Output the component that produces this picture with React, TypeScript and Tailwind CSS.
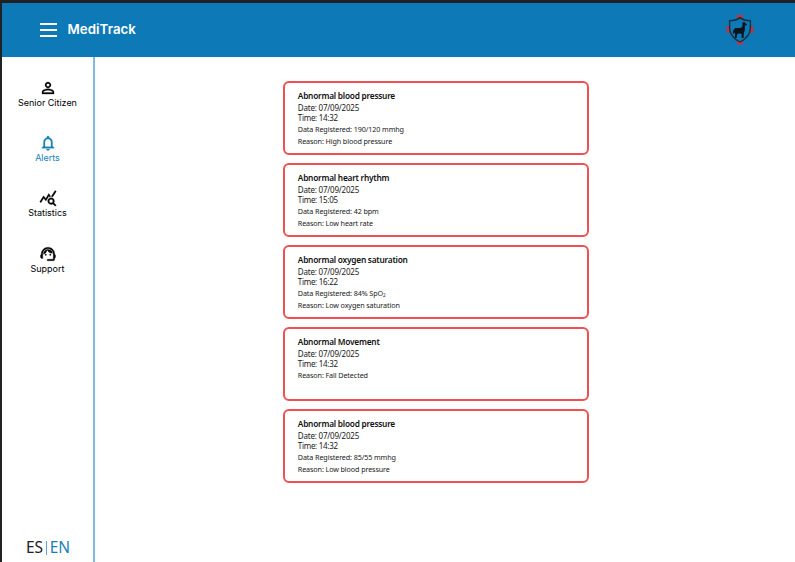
import {
  MdOutlineNotifications,
  MdPersonOutline,
  MdQueryStats,
  MdSupportAgent,
} from "react-icons/md";

type Alert = {
  title: string;
  date: string;
  time: string;
  details: { text: string; sub?: string }[];
};

const alerts: Alert[] = [
  {
    title: "Abnormal blood pressure",
    date: "07/09/2025",
    time: "14:32",
    details: [{ text: "Data Registered: 190/120 mmhg" }, { text: "Reason: High blood pressure" }],
  },
  {
    title: "Abnormal heart rhythm",
    date: "07/09/2025",
    time: "15:05",
    details: [{ text: "Data Registered: 42 bpm" }, { text: "Reason: Low heart rate" }],
  },
  {
    title: "Abnormal oxygen saturation",
    date: "07/09/2025",
    time: "16:22",
    details: [{ text: "Data Registered: 84% SpO", sub: "2" }, { text: "Reason: Low oxygen saturation" }],
  },
  {
    title: "Abnormal Movement",
    date: "07/09/2025",
    time: "14:32",
    details: [{ text: "Reason: Fall Detected" }],
  },
  {
    title: "Abnormal blood pressure",
    date: "07/09/2025",
    time: "14:32",
    details: [{ text: "Data Registered: 85/55 mmhg" }, { text: "Reason: Low blood pressure" }],
  },
];

function Logo() {
  return (
    <svg width="28" height="30" viewBox="0 0 28 30" aria-label="Llama shield">
      <path fill="#c9303c" d="M11 0h6v4h-6zM11 26h6v3.500h-6zM.8 11h4v7h-4zM23.200 11h4v7h-4z" />
      <path
        fill="#0d7ab7"
        stroke="#12303f"
        strokeWidth="1.400"
        d="M14 2.600C11 5 7.500 5.800 3.600 5.600V13c0 6.500 4.500 11 10.400 14 5.900-3 10.400-7.500 10.400-14V5.600C20.500 5.800 17 5 14 2.600Z"
      />
      <path
        fill="#0c1318"
        d="M16.700 6.800l.9.800 1-.8.300 1.300 1.900.8.100 1.300-2 .4-.1 4.800-1 2.300-.2 5.300h-1.900l-.2-4.300-3.800-.1-.7 1.700-.3 2.700H8.900l.2-4-.8-1.500-.6 1.300-.8-.4.400-3 1.900-2.300 5.200-.1 1.900-1.200z"
      />
    </svg>
  );
}

function NavItem({ icon: Icon, label, active = false }: { icon: typeof MdQueryStats; label: string; active?: boolean }) {
  return (
    <a className={`flex h-[55.200px] flex-col items-center ${active ? "text-[#1681b9]" : "text-black"}`}>
      <Icon className="size-[18px] stroke-current stroke-[0.400] [&>path[fill=none]]:stroke-none" />
      <span className="mt-px text-[9px] leading-[10px] tracking-[-0.020px]">{label}</span>
    </a>
  );
}

function AlertCard({ alert }: { alert: Alert }) {
  return (
    <article className="h-[74px] rounded-[6px] border-2 border-[#f05052] pt-[7px] pl-[12.800px] font-['Noto_Sans',sans-serif] whitespace-nowrap text-[#191919]">
      <h2 className="text-[8.300px] leading-[12px] font-semibold tracking-[-0.230px] text-[#111]">{alert.title}</h2>
      <p className="pt-px text-[8px] leading-[10px] tracking-[-0.200px]">Date: {alert.date}</p>
      <p className="mb-px text-[8px] leading-[10px] tracking-[-0.300px]">Time: {alert.time}</p>
      {alert.details.map((line) => (
        <p key={line.text} className="h-[11.700px] text-[7.200px] leading-[11.700px] tracking-[-0.110px]">
          {line.text}
          {line.sub && <span className="relative top-px text-[4.500px]">{line.sub}</span>}
        </p>
      ))}
    </article>
  );
}

export default function App() {
  return (
    <div className="flex h-[562px] w-[795px] flex-col overflow-hidden border-t-[3px] border-l-[2px] border-[#202124] bg-white font-[Inter,sans-serif]">
      <header className="flex h-[54px] shrink-0 items-center bg-[#0d7ab7] pr-[41px] pl-[38px]">
        <div className="flex w-[17px] flex-col gap-[4px]">
          <span className="h-[2px] bg-white" />
          <span className="h-[2px] bg-white" />
          <span className="h-[2px] bg-white" />
        </div>
        <h1 className="ml-[10.500px] text-[13.300px] font-semibold tracking-[0.050px] text-white">MediTrack</h1>
        <div className="ml-auto">
          <Logo />
        </div>
      </header>
      <div className="flex min-h-0 flex-1">
        <aside className="flex w-[93px] flex-col border-r-2 border-[#7dbbdf] pt-[22px]">
          <nav>
            <NavItem icon={MdPersonOutline} label="Senior Citizen" />
            <NavItem icon={MdOutlineNotifications} label="Alerts" active />
            <NavItem icon={MdQueryStats} label="Statistics" />
            <NavItem icon={MdSupportAgent} label="Support" />
          </nav>
          <div className="mt-auto mb-[7px] flex items-center pl-[24px] font-['Noto_Sans',sans-serif] text-[15.500px] leading-[15px]">
            <span className="text-[#222]">ES</span>
            <span className="mr-[2.500px] ml-[3px] h-[14px] w-px bg-[#5aa5cf]" />
            <span className="text-[#1681b9]">EN</span>
          </div>
        </aside>
        <main className="flex-1 pt-[24px] pl-[188px]">
          <div className="flex w-[306px] flex-col gap-[8px]">
            {alerts.map((alert, i) => (
              <AlertCard key={i} alert={alert} />
            ))}
          </div>
        </main>
      </div>
    </div>
  );
}
